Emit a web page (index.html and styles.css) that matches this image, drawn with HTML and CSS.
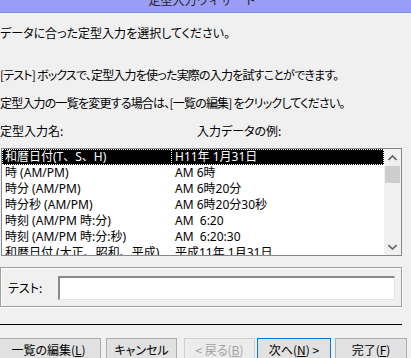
FILE: index.html
```html
<!DOCTYPE html>
<html lang="ja">
<head>
    <meta charset="UTF-8">
    <title>定型入力ウィザード</title>
    <link rel="stylesheet" href="styles.css">
</head>
<body>
    <div class="titlebar">
        <span class="title">定型入力ウィザード</span>
    </div>
    <div class="wizard">
        <p class="line l1">データに合った定型入力を選択してください。</p>
        <p class="line l2">[テスト] ボックスで、定型入力を使った実際の入力を試すことができます。</p>
        <p class="line l3">定型入力の一覧を変更する場合は、[一覧の編集] をクリックしてください。</p>
        <div class="line heads">
            <span class="head-name">定型入力名:</span>
            <span>入力データの例:</span>
        </div>

        <div class="listbox">
            <div class="rows">
                <div class="row selected"><span class="c1">和暦日付(T、S、H)</span><span class="c2">H11年 1月31日</span></div>
                <div class="row"><span class="c1">時 (AM/PM)</span><span class="c2">AM 6時</span></div>
                <div class="row"><span class="c1">時分 (AM/PM)</span><span class="c2">AM 6時20分</span></div>
                <div class="row"><span class="c1">時分秒 (AM/PM)</span><span class="c2">AM 6時20分30秒</span></div>
                <div class="row"><span class="c1">時刻 (AM/PM 時:分)</span><span class="c2">AM&nbsp;&nbsp;6:20</span></div>
                <div class="row"><span class="c1">時刻 (AM/PM 時:分:秒)</span><span class="c2">AM&nbsp;&nbsp;6:20:30</span></div>
                <div class="row"><span class="c1">和暦日付 (大正、昭和、平成)</span><span class="c2">平成11年 1月31日</span></div>
            </div>
            <div class="scrollbar">
                <div class="arrow">
                    <svg width="9" height="6" viewBox="0 0 9 6"><path d="M0.5 5 L4.5 1 L8.5 5" fill="none" stroke="#606060" stroke-width="1.6"/></svg>
                </div>
                <div class="thumb"></div>
                <div class="track"></div>
                <div class="arrow">
                    <svg width="9" height="6" viewBox="0 0 9 6"><path d="M0.5 1 L4.5 5 L8.5 1" fill="none" stroke="#606060" stroke-width="1.6"/></svg>
                </div>
            </div>
        </div>

        <div class="testbox">
            <span class="test-label">テスト:</span>
            <div class="test-input"></div>
        </div>

        <div class="separator"></div>

        <div class="buttons">
            <button class="btn btn-edit">一覧の編集(<u>L</u>)</button>
            <button class="btn btn-cancel">キャンセル</button>
            <button class="btn btn-back" disabled>&lt; 戻る(<u>B</u>)</button>
            <button class="btn btn-next">次へ(<u>N</u>) &gt;</button>
            <button class="btn btn-finish">完了(<u>F</u>)</button>
        </div>
    </div>
</body>
</html>
```

FILE: styles.css
```css
body {
    margin: 0;
    background-color: #f0f0f0;
    font-family: "Noto Sans CJK JP", "Noto Sans", sans-serif;
    font-size: 12px;
    color: #000;
    overflow: hidden;
}
.titlebar {
    height: 12px;
    background-color: #999df5;
    border-bottom: 1px solid #8286e6;
    overflow: hidden;
    text-align: center;
    padding-right: 6px;
}
.title {
    display: block;
    margin-top: -7px;
    line-height: 14px;
    color: #222;
}
.wizard {
    font-feature-settings: "palt";
}
.line {
    margin: 0;
    height: 16px;
    line-height: 16px;
    white-space: nowrap;
}
.l1 {
    margin-top: 12px;
}
.l2 {
    margin-top: 26px;
    letter-spacing: -0.8px;
}
.l3 {
    margin-top: 12px;
    letter-spacing: -0.8px;
}
.heads {
    margin-top: 12px;
    display: flex;
}
.head-name {
    width: 197px;
}

/* list */
.listbox {
    margin-top: 9px;
    margin-left: 1px;
    width: 399px;
    height: 106px;
    border: 1px solid #828790;
    background-color: #fff;
    display: flex;
    font-family: "Noto Sans", "Noto Sans CJK JP", sans-serif;
    font-feature-settings: normal;
}
.rows {
    flex: 1;
    height: 106px;
    overflow: hidden;
}
.row {
    display: flex;
    height: 16px;
    line-height: 16px;
    white-space: nowrap;
}
.c1 {
    width: 167px;
    padding-left: 3px;
}
.c2 {
    padding-left: 3px;
}
.selected {
    background-color: #000;
    color: #fff;
    outline: 1px dotted #fff;
    outline-offset: -1px;
}
.selected .c1 {
    border-right: 1px dotted #fff;
    width: 166px;
}
.scrollbar {
    width: 17px;
    background-color: #f0f0f0;
    display: flex;
    flex-direction: column;
}
.arrow {
    height: 17px;
    display: flex;
    align-items: center;
    justify-content: center;
}
.thumb {
    height: 17px;
    margin: 0 1px;
    background-color: #cdcdcd;
}
.track {
    flex: 1;
}

/* test box */
.testbox {
    margin-top: 11px;
    height: 37px;
    border: 1px solid #a0a0a0;
    box-shadow: inset 1px 1px #fff, 1px 1px #fff;
    display: flex;
    align-items: center;
    padding-left: 7px;
    padding-top: 1px;
    width: 393px;
}
.test-label {
    width: 50px;
}
.test-input {
    width: 334px;
    height: 21px;
    background-color: #fff;
    border-top: 2px solid #8a8a8a;
    border-left: 2px solid #8a8a8a;
    border-right: 1px solid #e3e3e3;
    border-bottom: 1px solid #e3e3e3;
}

.separator {
    margin-top: 17px;
    width: 402px;
    height: 1px;
    background-color: #000;
}

/* buttons */
.buttons {
    margin-top: 13px;
    display: flex;
    margin-left: -4px;
}
.btn {
    height: 23px;
    padding: 0;
    font-family: inherit;
    font-size: 12px;
    font-feature-settings: "palt";
    background-color: #e1e1e1;
    border: 1px solid #adadad;
    color: #000;
    white-space: nowrap;
}
.btn-edit {
    width: 105px;
}
.btn-cancel {
    width: 71px;
    margin-left: 5px;
}
.btn-back {
    width: 71px;
    margin-left: 7px;
    background-color: #ececec;
    border-color: #d0d0d0;
    color: #a0a0a0;
}
.btn-next {
    width: 74px;
    margin-left: 2px;
    border-color: #0078d7;
}
.btn-finish {
    width: 72px;
    margin-left: 4px;
}
```
